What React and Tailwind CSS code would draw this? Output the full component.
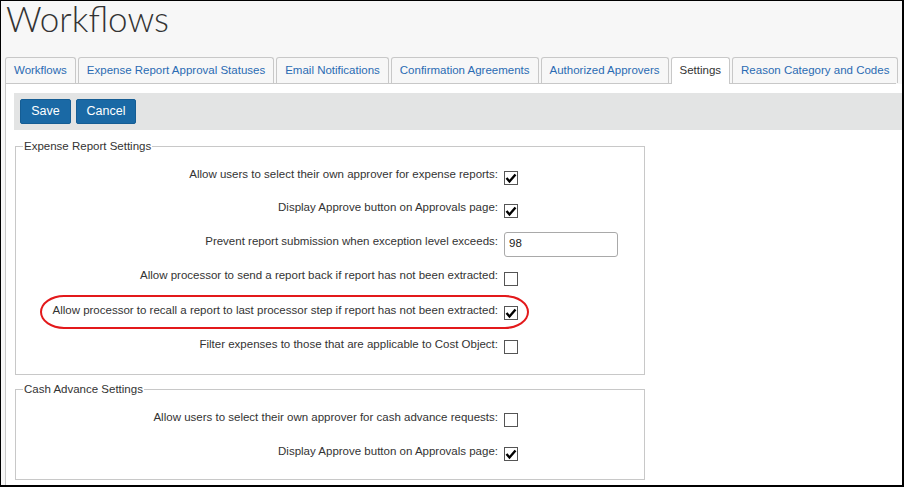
const tabs = [
  "Workflows",
  "Expense Report Approval Statuses",
  "Email Notifications",
  "Confirmation Agreements",
  "Authorized Approvers",
  "Settings",
  "Reason Category and Codes",
];

const Checkbox = ({ checked }) => (
  <span className="inline-flex items-center justify-center w-[14px] h-[14px] border border-[#555] bg-white mt-[2px]">
    {checked && (
      <svg width="12" height="12" viewBox="0 0 12 12">
        <path d="M1.5 6 L4.5 9.5 L10.5 2.5" fill="none" stroke="#000" strokeWidth="2.4" />
      </svg>
    )}
  </span>
);

// una fila de la configuración: etiqueta a la derecha y control
const Fila = ({ label, h, children, circled }) => (
  <div className={`relative flex items-center ${h}`}>
    <div className="flex-1 text-right pr-[6px] mb-[3px] whitespace-nowrap">{label}</div>
    <div className="w-[140px] flex items-center">{children}</div>
    {circled && (
      <div className="absolute top-0 left-[24px] w-[489px] h-[34px] border-2 border-[#e3191b] rounded-[24px/17px] pointer-events-none"></div>
    )}
  </div>
);

export default function App() {
  return (
    <div
      className="w-[904px] h-[487px] border-l border-t border-r-2 border-b-2 border-black bg-[#f7f7f7] flex flex-col text-[11.5px] text-[#333]"
      style={{ fontFamily: '"Liberation Sans", Arial, sans-serif' }}
    >
      <div className="h-[56px] pl-[5px]">
        <h1
          className="text-[35px] leading-[35px] font-light text-[#333]"
          style={{ fontFamily: 'Lato, "Open Sans", sans-serif' }}
        >
          Workflows
        </h1>
      </div>

      <div className="ml-[4px] w-[891px] h-[27px] flex items-end gap-[2px] border-b border-[#c8c8c8]">
        {tabs.map((t) =>
          t === "Settings" ? (
            <div
              key={t}
              className="h-[27px] -mb-px px-[8px] flex items-center whitespace-nowrap border border-b-0 border-[#c8c8c8] rounded-t-[3px] bg-white text-[#333]"
            >
              {t}
            </div>
          ) : (
            <div
              key={t}
              className="h-[26px] px-[8px] flex items-center whitespace-nowrap border border-b-0 border-[#c8c8c8] rounded-t-[3px] bg-[#f7f7f7] text-[#2a6bb3]"
            >
              {t}
            </div>
          )
        )}
      </div>

      <div className="flex-1 ml-[4px] border-l border-[#c8c8c8] bg-white pt-[9px] pl-[8px]">
        <div className="h-[37px] bg-[#e3e4e4] px-[6px] flex items-center gap-[5px]">
          <button className="w-[51px] h-[25px] bg-[#1a69a5] border border-[#155d94] rounded-[2px] text-white text-[12.5px]">
            Save
          </button>
          <button className="w-[60px] h-[25px] bg-[#1a69a5] border border-[#155d94] rounded-[2px] text-white text-[12.5px]">
            Cancel
          </button>
        </div>

        <fieldset className="ml-[1px] mt-[9px] w-[630px] border border-[#c8c8c8] pt-[7px] pb-[11px]">
          <legend className="ml-[7px] px-[1px] leading-[14px]">Expense Report Settings</legend>
          <Fila label="Allow users to select their own approver for expense reports:" h="h-[33px]">
            <Checkbox checked />
          </Fila>
          <Fila label="Display Approve button on Approvals page:" h="h-[33px]">
            <Checkbox checked />
          </Fila>
          <Fila label="Prevent report submission when exception level exceeds:" h="h-[34px]">
            <div className="w-[114px] h-[25px] mt-[2px] border border-[#a9a9a9] rounded-[3px] px-[4px] flex items-center text-[#222]">
              98
            </div>
          </Fila>
          <Fila label="Allow processor to send a report back if report has not been extracted:" h="h-[35px]">
            <Checkbox />
          </Fila>
          <Fila
            label="Allow processor to recall a report to last processor step if report has not been extracted:"
            h="h-[34px]"
            circled
          >
            <Checkbox checked />
          </Fila>
          <Fila label="Filter expenses to those that are applicable to Cost Object:" h="h-[34px]">
            <Checkbox />
          </Fila>
        </fieldset>

        <fieldset className="ml-[1px] mt-[7px] w-[630px] border border-[#c8c8c8] pt-[6px] pb-[9px]">
          <legend className="ml-[7px] px-[1px] leading-[14px]">Cash Advance Settings</legend>
          <Fila label="Allow users to select their own approver for cash advance requests:" h="h-[34px]">
            <Checkbox />
          </Fila>
          <Fila label="Display Approve button on Approvals page:" h="h-[34px]">
            <Checkbox checked />
          </Fila>
        </fieldset>
      </div>
    </div>
  );
}
